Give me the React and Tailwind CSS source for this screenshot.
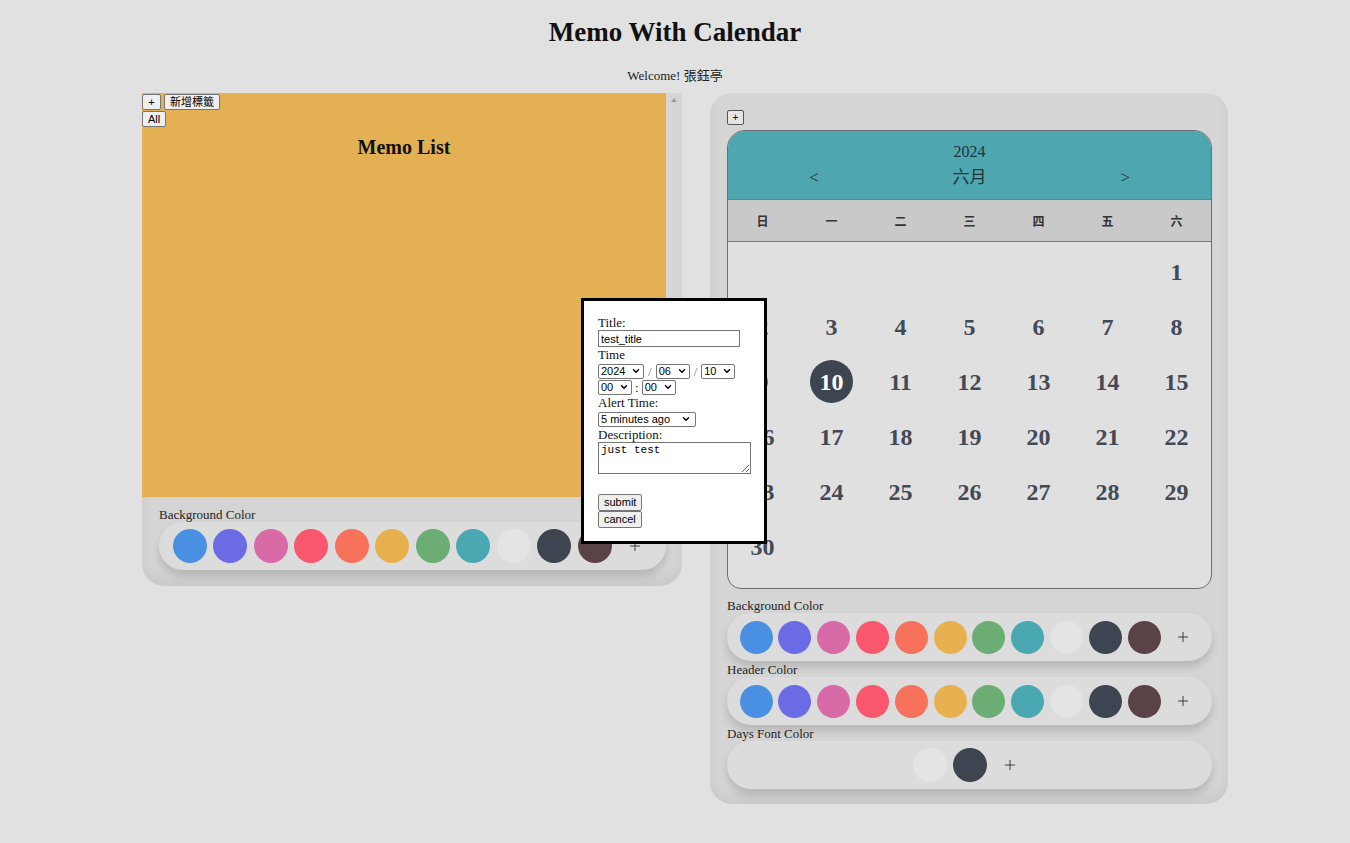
import React from 'react';
import { ChevronDown, Plus } from 'lucide-react';

const palette = ['#4a90e2', '#6b6be6', '#d96aa8', '#f9566f', '#f7715b', '#e7b14f', '#6bad74', '#49a8b1', '#e4e4e4', '#3e4551', '#5b4247'];

const weekDays = ['日', '一', '二', '三', '四', '五', '六'];

const weeks = [
    [null, null, null, null, null, null, 1],
    [2, 3, 4, 5, 6, 7, 8],
    [9, 10, 11, 12, 13, 14, 15],
    [16, 17, 18, 19, 20, 21, 22],
    [23, 24, 25, 26, 27, 28, 29],
    [30, null, null, null, null, null, null],
];

const serif = "font-['Liberation_Serif','Noto_Sans_CJK_TC',serif]";
const sans = "font-['Liberation_Sans','Noto_Sans_CJK_TC',sans-serif]";

// native-looking button
const Btn = ({ children, className = '' }) => (
    <button className={`${sans} bg-[#efefef] border border-[#767676] rounded-[2px] text-[11px] leading-[13px] text-black ${className}`}>
        {children}
    </button>
);

// select look-alike
const FakeSelect = ({ value, className = '' }) => (
    <span className={`${sans} inline-flex items-center justify-between h-[15px] border border-[#767676] rounded-[2px] bg-white pl-[2px] pr-[2px] text-[11px] leading-none text-black align-middle ${className}`}>
        <span>{value}</span>
        <ChevronDown size={10} strokeWidth={3.5} />
    </span>
);

const ColorPill = ({ colors, size, gap }) => (
    <div className={`flex items-center justify-center h-[48px] rounded-full bg-[#dcdcdc] shadow-[0_6px_8px_rgba(0,0,0,0.14)] ${gap}`}>
        {colors.map((c, i) => (
            <span key={i} className={`block rounded-full ${size}`} style={{ backgroundColor: c }} />
        ))}
        <span className={`flex items-center justify-center text-[#333] ${size}`}>
            <Plus size={16} strokeWidth={1.4} />
        </span>
    </div>
);

const MemoPanel = () => (
    <div className="w-[540px] h-[493px] bg-[#d5d5d5] rounded-b-[22px] overflow-hidden flex flex-col shadow-[inset_0_-8px_12px_rgba(0,0,0,0.05)]">
        <div className="flex h-[404px]">
            <div className="w-[524px] bg-[#e3b053] flex flex-col">
                <div className="flex gap-[3px] pt-[1px]">
                    <Btn className="w-[19px] h-[16px]">+</Btn>
                    <Btn className="px-[5px] h-[16px]">新增標籤</Btn>
                </div>
                <div className="flex pt-[1px]">
                    <Btn className="w-[24px] h-[16px]">All</Btn>
                </div>
                <h2 className={`${serif} mt-[9px] text-center text-[20px] leading-[23px] font-bold text-[#111]`}>Memo List</h2>
            </div>
            <div className="w-[16px] bg-[#d6d6d6] flex justify-center pt-[5px]">
                <span className="block w-0 h-0 border-l-[3px] border-r-[3px] border-b-[4px] border-l-transparent border-r-transparent border-b-[#9a9a9a]" />
            </div>
        </div>
        <div className="pl-[17px] pr-[16px] pt-[10px]">
            <div className={`${serif} text-[13px] leading-[15px] text-[#222]`}>Background Color</div>
            <ColorPill colors={palette} size="w-[34px] h-[34px]" gap="gap-[6.5px]" />
        </div>
    </div>
);

const Calendar = () => (
    <div className="mt-[5px] h-[459px] border border-[#6e6e6e] rounded-t-[18px] rounded-b-[14px] overflow-hidden flex flex-col bg-[#e0e0e0]">
        <div className="h-[68px] bg-[#4ea6b1] flex flex-col items-center pt-[12px] text-[#1f3337]">
            <div className={`${serif} text-[16px] leading-[18px]`}>2024</div>
            <div className="w-full flex items-center justify-between px-[81px] mt-[7px]">
                <span className={`${serif} text-[17px] leading-[20px]`}>&lt;</span>
                <span className={`${serif} text-[17px] leading-[20px]`}>六月</span>
                <span className={`${serif} text-[17px] leading-[20px]`}>&gt;</span>
            </div>
        </div>
        <div className="h-[43px] grid grid-cols-7 items-center bg-[#c9c9c9] border-t border-b border-[#7b7b7b]">
            {weekDays.map((d) => (
                <span key={d} className="text-center text-[12px] font-bold text-[#333] font-['Noto_Sans_CJK_TC',sans-serif]">{d}</span>
            ))}
        </div>
        <div className="pt-[2px] flex flex-col">
            {weeks.map((w, i) => (
                <div key={i} className="grid grid-cols-7 h-[55px]">
                    {w.map((d, j) => (
                        <div key={j} className="flex items-center justify-center">
                            {d === 10 ? (
                                <span className={`${serif} flex items-center justify-center w-[43px] h-[43px] rounded-full bg-[#3e4551] text-white text-[24px] font-bold`}>10</span>
                            ) : (
                                d && <span className={`${serif} text-[24px] font-bold text-[#434a55]`}>{d}</span>
                            )}
                        </div>
                    ))}
                </div>
            ))}
        </div>
    </div>
);

const CalendarPanel = () => (
    <div className="w-[518px] h-[711px] bg-[#d5d5d5] rounded-[22px] pl-[17px] pr-[16px] pt-[17px] shadow-[inset_0_-8px_12px_rgba(0,0,0,0.05)]">
        <button className={`${sans} flex items-center justify-center w-[17px] h-[15px] bg-[#e4e4e4] border border-[#555] rounded-[2px] text-[10px] leading-none text-black`}>+</button>
        <Calendar />
        <div className={`${serif} mt-[9px] text-[13px] leading-[15px] text-[#222]`}>Background Color</div>
        <ColorPill colors={palette} size="w-[33px] h-[33px]" gap="gap-[5.8px]" />
        <div className={`${serif} mt-[1px] text-[13px] leading-[15px] text-[#222]`}>Header Color</div>
        <ColorPill colors={palette} size="w-[33px] h-[33px]" gap="gap-[5.8px]" />
        <div className={`${serif} mt-[1px] text-[13px] leading-[15px] text-[#222]`}>Days Font Color</div>
        <ColorPill colors={['#e4e4e4', '#3e4551']} size="w-[34px] h-[34px]" gap="gap-[6px]" />
    </div>
);

const MemoForm = () => (
    <div className={`${serif} absolute left-[581px] top-[298px] w-[186px] h-[246px] bg-white border-[3px] border-black pl-[14px] pt-[14px] text-[13px] leading-[15px] text-[#111]`}>
        <div>Title:</div>
        <input
            readOnly
            defaultValue="test_title"
            className={`${sans} block w-[142px] h-[17px] border border-[#767676] px-[2px] text-[11px] text-black outline-none`}
        />
        <div>Time</div>
        <div className="flex items-center h-[16px] mt-[1px]">
            <FakeSelect value="2024" className="w-[46px]" />
            <span className="mx-[4px] text-[#777]">/</span>
            <FakeSelect value="06" className="w-[34px]" />
            <span className="mx-[4px] text-[#777]">/</span>
            <FakeSelect value="10" className="w-[34px]" />
        </div>
        <div className="flex items-center h-[16px]">
            <FakeSelect value="00" className="w-[34px]" />
            <span className="mx-[3px]">:</span>
            <FakeSelect value="00" className="w-[34px]" />
        </div>
        <div>Alert Time:</div>
        <FakeSelect value="5 minutes ago" className="w-[98px] pr-[4px]" />
        <div>Description:</div>
        <textarea
            readOnly
            defaultValue="just test"
            className="block w-[153px] h-[32px] border border-[#767676] px-[2px] py-[1px] text-[11px] leading-[13px] text-black font-['Liberation_Mono',monospace] outline-none"
        />
        <div className="h-[20px]" />
        <Btn className="block px-[5px] h-[17px]">submit</Btn>
        <Btn className="block px-[5px] h-[17px]">cancel</Btn>
    </div>
);

export default function App() {
    return (
        <div className="relative min-h-screen bg-[#e1e1e1] pb-[40px]">
            <h1 className={`${serif} pt-[17px] text-center text-[27px] leading-[31px] font-bold text-[#111]`}>Memo With Calendar</h1>
            <p className={`${serif} mt-[20px] text-center text-[13px] leading-[15px] text-[#222]`}>Welcome! 張鈺亭</p>
            <div className="mt-[10px] flex items-start gap-[28px] pl-[142px]">
                <MemoPanel />
                <CalendarPanel />
            </div>
            <MemoForm />
        </div>
    );
}
